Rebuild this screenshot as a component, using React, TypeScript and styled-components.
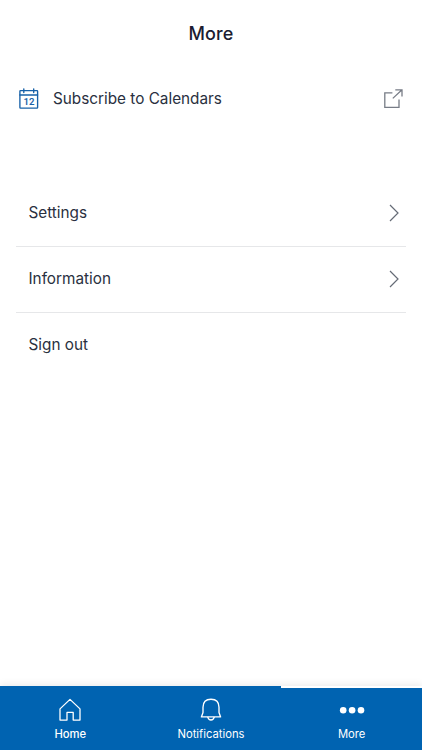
import React from 'react';
import styled, { createGlobalStyle } from 'styled-components';

const GlobalStyle = createGlobalStyle`
  * { box-sizing: border-box; }
  body { margin: 0; background: #fff; font-family: Inter, sans-serif; }
  button { font: inherit; border: 0; background: none; padding: 0; color: inherit; }
  svg { display: block; flex: none; }
`;

const Screen = styled.div`
  height: 100vh;
  display: flex;
  flex-direction: column;
  background: #fff;
  color: #293040;
  overflow: hidden;
`;

const Header = styled.header`
  height: 66px;
  padding-top: 2px;
  display: flex;
  align-items: center;
  justify-content: center;
`;

const Title = styled.h1`
  margin: 0;
  font-size: 18px;
  font-weight: 500;
  line-height: 24px;
  letter-spacing: 0.1px;
  color: #1b1c31;
`;

const CalendarLink = styled.button`
  height: 66px;
  display: flex;
  align-items: center;
  padding: 0 18px;
  gap: 13px;
  text-align: left;
`;

const Label = styled.span`
  flex: 1;
  font-size: 15.3px;
  line-height: 22px;
`;

const Menu = styled.nav`
  margin: 48px 16px 0;
  display: flex;
  flex-direction: column;
`;

const MenuRow = styled.button<{ $last?: boolean }>`
  height: 66px;
  display: flex;
  align-items: center;
  padding: 0 4px 0 12.5px;
  text-align: left;
  box-shadow: ${(p) => (p.$last ? 'none' : '0 1px 0 #e6e7e9')};
`;

const TabBar = styled.footer`
  margin-top: auto;
  height: 64px;
  display: grid;
  grid-template-columns: repeat(3, 1fr);
  box-shadow: 0 -2px 7px rgba(0, 0, 0, 0.08);
  background: #fff;
`;

const Tab = styled.button<{ $current?: boolean; $bold?: boolean }>`
  margin-top: ${(p) => (p.$current ? 2 : 0)}px;
  padding-top: ${(p) => (p.$current ? 10 : 12)}px;
  display: flex;
  flex-direction: column;
  align-items: center;
  gap: 4px;
  background: #0063b1;
  color: #fff;
  font-size: 11.25px;
  font-weight: ${(p) => (p.$bold ? 500 : 400)};
  line-height: 16px;
`;

const CalendarIcon = () => (
  <svg width="22" height="22" viewBox="0 0 22 22" fill="none" stroke="#1761a8" strokeWidth="1.35">
    <rect x="1.9" y="2.6" width="17.7" height="17.5" rx="0.6" />
    <path d="M1.9 7h17.7M5.8 0.8v3.8M15.7 0.8v3.8" strokeLinecap="round" />
    <text x="10.9" y="17" textAnchor="middle" fontFamily="Roboto, sans-serif" fontSize="9.6" fontWeight="600" fill="#1761a8" stroke="none">12</text>
  </svg>
);

const ExternalIcon = () => (
  <svg width="22" height="22" viewBox="0 0 22 22" fill="none" stroke="#777c86" strokeWidth="1.3">
    <path d="M10.4 4.8H2.8v14.6h14.2v-8M10.8 10.4 20 1.8M13.3 1.8H20v6.7" />
  </svg>
);

const Chevron = () => (
  <svg width="16" height="20" viewBox="0 0 16 20" fill="none" stroke="#656b76" strokeWidth="1.2">
    <path d="m4 2 8 8-8 8" />
  </svg>
);

const HomeIcon = () => (
  <svg width="24" height="24" viewBox="0 0 24 24" fill="none" stroke="#fff" strokeWidth="1.3" strokeLinejoin="round">
    <path d="M2 10.9 12 1.4l10 9.5v11.2h-6.8v-7.7H9v7.7H2z" />
  </svg>
);

const BellIcon = () => (
  <svg width="24" height="24" viewBox="0 0 24 24" fill="none" stroke="#fff" strokeWidth="1.35" strokeLinejoin="round">
    <path d="M4 14.5V9.3C4 4.2 7.1 1.2 12 1.2s8 3 8 8.1v5.2l1.6 4.4H2.4z" />
    <path d="M8.7 18.9c.5 2 1.5 3.1 3.3 3.1s2.8-1.1 3.3-3.1" />
  </svg>
);

const MoreIcon = () => (
  <svg width="26" height="24" viewBox="0 0 26 24" fill="#fff">
    <circle cx="4.2" cy="12.2" r="3.3" />
    <circle cx="13.1" cy="12.2" r="3.3" />
    <circle cx="22" cy="12.2" r="3.3" />
  </svg>
);

export default function App() {
  return (
    <>
      <GlobalStyle />
      <Screen>
        <Header><Title>More</Title></Header>
        <CalendarLink>
          <CalendarIcon />
          <Label>Subscribe to Calendars</Label>
          <ExternalIcon />
        </CalendarLink>
        <Menu>
          <MenuRow><Label>Settings</Label><Chevron /></MenuRow>
          <MenuRow><Label>Information</Label><Chevron /></MenuRow>
          <MenuRow $last><Label>Sign out</Label></MenuRow>
        </Menu>
        <TabBar>
          <Tab $bold><HomeIcon />Home</Tab>
          <Tab><BellIcon />Notifications</Tab>
          <Tab $current><MoreIcon />More</Tab>
        </TabBar>
      </Screen>
    </>
  );
}
